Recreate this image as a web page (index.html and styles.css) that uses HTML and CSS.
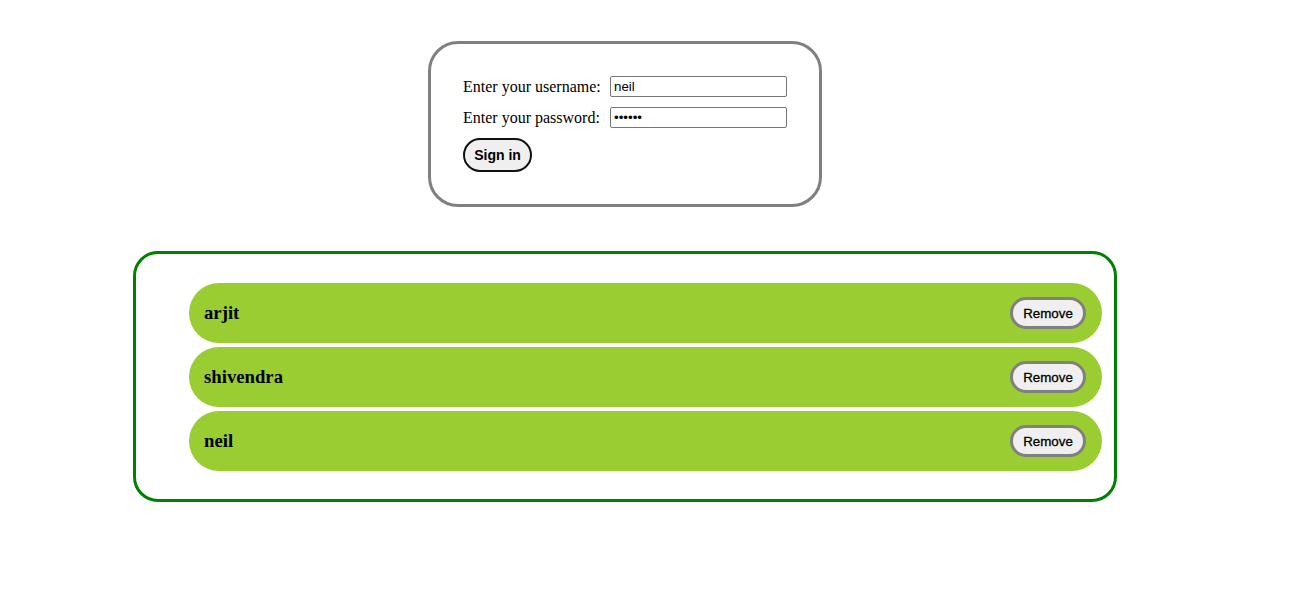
FILE: index.html
```html
<!DOCTYPE html>
<html>
<head>
<meta charset="utf-8">
<link rel="stylesheet" href="styles.css">
</head>
<body>
<main class="page">
  <form class="login">
    <div class="fields">
      <label class="label" for="u">Enter your username:</label>
      <input class="field" id="u" type="text" value="neil">
      <label class="label" for="p">Enter your password:</label>
      <input class="field" id="p" type="password" value="123456">
    </div>
    <button type="button" class="signin">Sign in</button>
  </form>
  <section class="users">
    <ul class="list">
      <li class="item"><span class="name">arjit</span><button type="button" class="remove">Remove</button></li>
      <li class="item"><span class="name">shivendra</span><button type="button" class="remove">Remove</button></li>
      <li class="item"><span class="name">neil</span><button type="button" class="remove">Remove</button></li>
    </ul>
  </section>
</main>
</body>
</html>
```
FILE: styles.css
```css
html, body { margin: 0; padding: 0; background: #fff; }
body { padding: 8px; font-family: "Liberation Serif", "Times New Roman", serif; color: #000; }
.page {
  width: 1234px;
  display: flex;
  flex-direction: column;
  align-items: center;
  padding-top: 33px;
  gap: 44px;
}
.login {
  box-sizing: border-box;
  width: 394px;
  height: 166px;
  border: 3px solid #808080;
  border-radius: 30px;
  padding: 32px 32px;
  display: flex;
  flex-direction: column;
  align-items: flex-start;
  gap: 10px;
  margin: 0;
}
.fields {
  display: grid;
  grid-template-columns: 147px 177px;
  row-gap: 10px;
  align-items: center;
}
.label { font-size: 16px; line-height: 21px; }
.field {
  box-sizing: border-box;
  width: 177px;
  height: 21px;
  margin: 0;
  border: 1px solid #767676;
  border-radius: 2px;
  padding: 1px 3px;
  font-family: "Liberation Sans", Arial, sans-serif;
  font-size: 13.33px;
  color: #000;
}
.signin {
  box-sizing: border-box;
  height: 34px;
  width: 69px;
  padding: 0;
  background: #efefef;
  border: 2px solid #111;
  border-radius: 17px;
  font-family: "Liberation Sans", Arial, sans-serif;
  font-weight: bold;
  font-size: 14px;
  color: #000;
}
.users {
  box-sizing: border-box;
  width: 984px;
  height: 251px;
  border: 3px solid #008000;
  border-radius: 25px;
  padding: 29px 12px 28px 53px;
}
.list {
  list-style: none;
  margin: 0;
  padding: 0;
  display: flex;
  flex-direction: column;
  gap: 4px;
}
.item {
  box-sizing: border-box;
  height: 60px;
  background: #9acd32;
  border-radius: 30px;
  display: flex;
  align-items: center;
  justify-content: space-between;
  padding: 0 16px 0 15px;
}
.name { font-weight: bold; font-size: 18.72px; }
.remove {
  box-sizing: border-box;
  width: 76px;
  height: 32px;
  padding: 0;
  background: #efefef;
  border: 3px solid #808080;
  border-radius: 16px;
  font-family: "Liberation Sans", Arial, sans-serif;
  font-weight: normal;
  -webkit-text-stroke: 0.3px #000;
  font-size: 13.33px;
  color: #000;
}
```
